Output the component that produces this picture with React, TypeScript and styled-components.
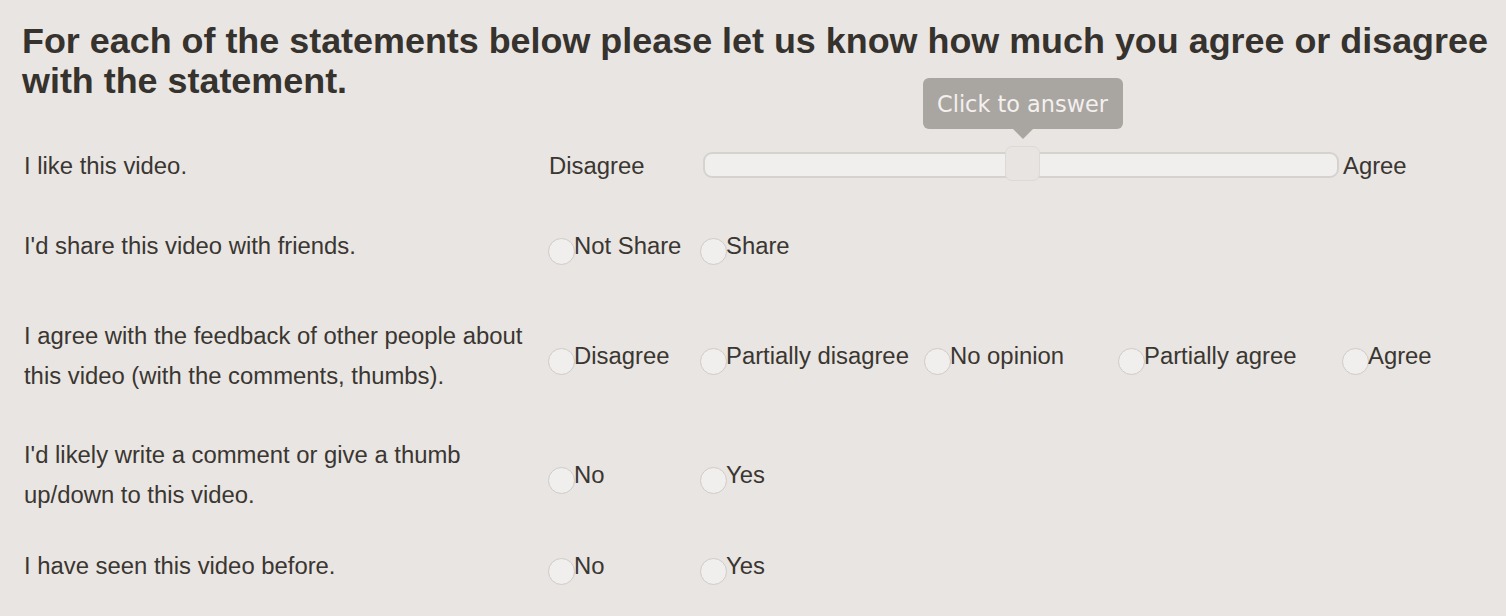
import styled, { createGlobalStyle } from "styled-components";

type Question = {
  label: string;
  kind: "slider" | "radio";
  options?: string[];
  widths?: number[];
};

const questions: Question[] = [
  { label: "I like this video.", kind: "slider" },
  {
    label: "I'd share this video with friends.",
    kind: "radio",
    options: ["Not Share", "Share"],
    widths: [152],
  },
  {
    label:
      "I agree with the feedback of other people about this video (with the comments, thumbs).",
    kind: "radio",
    options: [
      "Disagree",
      "Partially disagree",
      "No opinion",
      "Partially agree",
      "Agree",
    ],
    widths: [152, 224, 194, 224],
  },
  {
    label: "I'd likely write a comment or give a thumb up/down to this video.",
    kind: "radio",
    options: ["No", "Yes"],
    widths: [152],
  },
  {
    label: "I have seen this video before.",
    kind: "radio",
    options: ["No", "Yes"],
    widths: [152],
  },
];

const GlobalStyle = createGlobalStyle`
  html, body {
    margin: 0;
    padding: 0;
    background: #e9e5e2;
  }
  * {
    box-sizing: border-box;
  }
`;

const App = () => {
  return (
    <>
      <GlobalStyle />
      <Page>
        <Heading>
          For each of the statements below please let us know how much you
          agree or disagree with the statement.
        </Heading>
        <Survey>
          {questions.map((q, i) => (
            <Row key={i}>
              <Label>{q.label}</Label>
              {q.kind === "slider" ? (
                <SliderRow>
                  <EndLabel>Disagree</EndLabel>
                  <Track>
                    <Handle>
                      <Tooltip>Click to answer</Tooltip>
                    </Handle>
                  </Track>
                  <AgreeLabel>Agree</AgreeLabel>
                </SliderRow>
              ) : (
                <Options>
                  {q.options!.map((opt, j) => (
                    <Option key={j} $w={q.widths?.[j]}>
                      <Radio />
                      <OptionText>{opt}</OptionText>
                    </Option>
                  ))}
                </Options>
              )}
            </Row>
          ))}
        </Survey>
      </Page>
    </>
  );
};
export default App;

const Page = styled.main`
  width: 1506px;
  height: 616px;
  padding: 21px 0 0 22px;
  font-family: "Liberation Sans", Arial, Helvetica, sans-serif;
  color: #38342f;
  overflow: hidden;
`;

const Heading = styled.h1`
  margin: 0;
  font-size: 35.9px;
  font-weight: 700;
  line-height: 40px;
  color: #36322d;
`;

const Survey = styled.div`
  margin-top: 25px;
  display: grid;
  grid-template-columns: 526px 1fr;
  grid-template-rows: 80px 80px 140px 98px 84px;
`;

const Row = styled.div`
  display: contents;
`;

const Label = styled.div`
  align-self: center;
  padding: 0 12px 0 2px;
  font-size: 23.85px;
  line-height: 40px;
  color: #3a3631;
`;

const SliderRow = styled.div`
  align-self: center;
  display: flex;
  align-items: center;
  height: 40px;
`;

const EndLabel = styled.div`
  width: 155px;
  padding-left: 1px;
  font-size: 23.85px;
  line-height: 40px;
  color: #3a3631;
`;

const Track = styled.div`
  position: relative;
  width: 636px;
  height: 26px;
  margin-top: -2px;
  border: 2px solid #d6d3cf;
  border-radius: 9px;
  background: #f0efed;
`;

const Handle = styled.div`
  position: absolute;
  left: 300px;
  top: -8px;
  width: 35px;
  height: 35px;
  border: 1px solid #dcd9d6;
  border-radius: 7px;
  background: #e7e4e1;
`;

const Tooltip = styled.div`
  position: absolute;
  left: 50%;
  bottom: 51px;
  width: 200px;
  height: 51px;
  margin-left: -100px;
  border-radius: 6px;
  background: #a9a5a1;
  color: #f3f0ee;
  font-family: "DejaVu Sans", Verdana, sans-serif;
  font-size: 22.4px;
  line-height: 52px;
  text-align: center;
  white-space: nowrap;

  &::after {
    content: "";
    position: absolute;
    left: 50%;
    top: 100%;
    margin-left: -10px;
    border-left: 10px solid transparent;
    border-right: 10px solid transparent;
    border-top: 10px solid #a9a5a1;
  }
`;

const AgreeLabel = styled.div`
  margin-left: 4px;
  font-size: 23.85px;
  line-height: 40px;
  color: #3a3631;
`;

const Options = styled.div`
  align-self: center;
  display: flex;
`;

const Option = styled.label<{ $w?: number }>`
  display: flex;
  align-items: flex-start;
  width: ${(p) => (p.$w ? `${p.$w}px` : "auto")};
  height: 40px;
`;

const Radio = styled.span`
  flex: none;
  width: 27px;
  height: 27px;
  margin-top: 12px;
  border: 1px solid #cfcbc7;
  border-radius: 50%;
  background: #f1efed;
`;

const OptionText = styled.span`
  margin-left: -1px;
  font-size: 23.85px;
  line-height: 40px;
  color: #3a3631;
  white-space: nowrap;
`;
